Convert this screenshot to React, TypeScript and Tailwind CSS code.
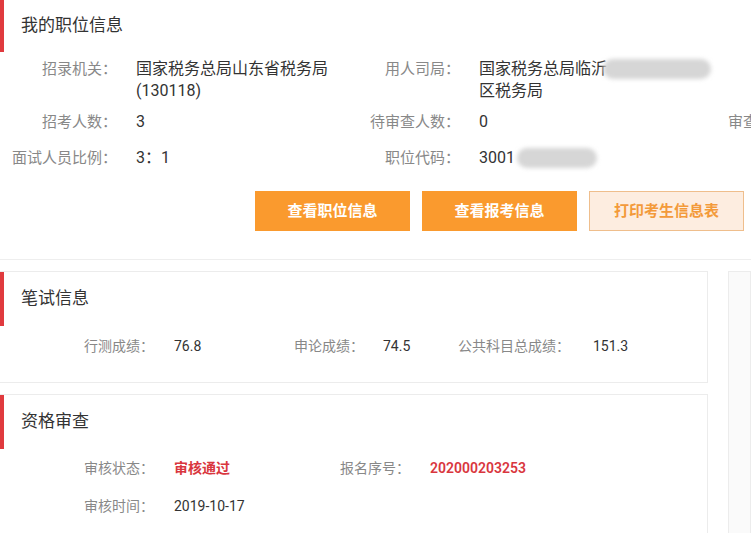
import type { ReactNode } from 'react';

const font = { fontFamily: 'Roboto, "Noto Sans CJK SC", sans-serif' };

function Blur({ className }: { className: string }) {
    return <span className={`inline-block rounded-full bg-[#d6d6d6] blur-[2px] align-middle ${className}`} />;
}

function InfoItem({ label, children }: { label: string; children: ReactNode }) {
    return (
        <div className="flex w-[343px] shrink-0">
            <div className="w-[117px] shrink-0 text-right text-[15px] text-[#888] whitespace-nowrap">{label}</div>
            <div className="ml-[19px] w-[200px] text-[16px] text-[#333]">{children}</div>
        </div>
    );
}

function Card({ title, children }: { title: string; children: ReactNode }) {
    return (
        <div className="relative border border-l-0 border-[#ececec] bg-white">
            <div className="flex h-[54px] items-center border-l-4 border-[#e03a3e] pl-[17px] text-[17px] text-[#333]">
                {title}
            </div>
            {children}
        </div>
    );
}

function Field({ label, value, labelW, valueW, red }: { label: string; value: string; labelW: string; valueW: string; red?: boolean }) {
    return (
        <div className="flex shrink-0 text-[14px]">
            <span className={`${labelW} shrink-0 text-[#888]`}>{label}</span>
            <span className={`${valueW} ${red ? 'font-semibold text-[#d9363e]' : 'text-[#333]'}`}>{value}</span>
        </div>
    );
}

export default function App() {
    return (
        <div className="h-[533px] w-[751px] overflow-hidden bg-white" style={font}>
            {/* position summary */}
            <div className="h-[260px] border-b border-[#eee]">
                <div className="flex h-[52px] items-center border-l-4 border-[#e03a3e] pl-[17px] text-[17px] text-[#333]">
                    我的职位信息
                </div>
                <div className="mt-[6px] flex leading-[22px]">
                    <InfoItem label="招录机关：">国家税务总局山东省税务局(130118)</InfoItem>
                    <InfoItem label="用人司局：">
                        <div className="whitespace-nowrap">
                            国家税务总局临沂
                            <Blur className="-ml-[4px] h-[20px] w-[108px] -translate-y-[1px]" />
                        </div>
                        <div>区税务局</div>
                    </InfoItem>
                </div>
                <div className="mt-[9px] flex leading-[22px]">
                    <InfoItem label="招考人数：">3</InfoItem>
                    <InfoItem label="待审查人数：">0</InfoItem>
                    <InfoItem label="审查人数：">0</InfoItem>
                </div>
                <div className="mt-[14px] flex leading-[22px]">
                    <InfoItem label="面试人员比例：">3：1</InfoItem>
                    <InfoItem label="职位代码：">
                        <span className="whitespace-nowrap">
                            3001
                            <Blur className="ml-[2px] h-[20px] w-[80px] -translate-y-[1px]" />
                        </span>
                    </InfoItem>
                </div>
                <div className="mt-[22px] flex justify-end gap-[12px] pr-[7px]">
                    <button type="button" className="h-[40px] w-[155px] bg-[#fa9a2e] text-[15px] font-bold text-white">
                        查看职位信息
                    </button>
                    <button type="button" className="h-[40px] w-[155px] bg-[#fa9a2e] text-[15px] font-bold text-white">
                        查看报考信息
                    </button>
                    <button type="button" className="h-[40px] w-[155px] border border-[#efbe8c] bg-[#fdede0] text-[15px] font-bold text-[#f39a3a]">
                        打印考生信息表
                    </button>
                </div>
            </div>

            {/* exam cards */}
            <div className="mt-[11px] flex gap-[20px]">
                <div className="flex w-[708px] shrink-0 flex-col gap-[11px]">
                    <Card title="笔试信息">
                        <div className="flex h-[56px] items-start pl-[84px] pt-[9px] leading-[22px]">
                            <Field label="行测成绩：" value="76.8" labelW="w-[90px]" valueW="w-[120px]" />
                            <Field label="申论成绩：" value="74.5" labelW="w-[89px]" valueW="w-[75px]" />
                            <Field label="公共科目总成绩：" value="151.3" labelW="w-[135px]" valueW="w-[60px]" />
                        </div>
                    </Card>
                    <Card title="资格审查">
                        <div className="pl-[84px] pt-[8px] leading-[22px]">
                            <div className="flex">
                                <Field label="审核状态：" value="审核通过" labelW="w-[90px]" valueW="w-[166px]" red />
                                <Field label="报名序号：" value="202000203253" labelW="w-[90px]" valueW="w-[140px]" red />
                            </div>
                            <div className="mt-[16px] flex">
                                <Field label="审核时间：" value="2019-10-17" labelW="w-[90px]" valueW="w-[166px]" />
                            </div>
                            <div className="h-[40px]" />
                        </div>
                    </Card>
                </div>
                <div className="h-[300px] flex-1 border border-[#ececec] bg-[#fafafa]" />
            </div>
        </div>
    );
}
